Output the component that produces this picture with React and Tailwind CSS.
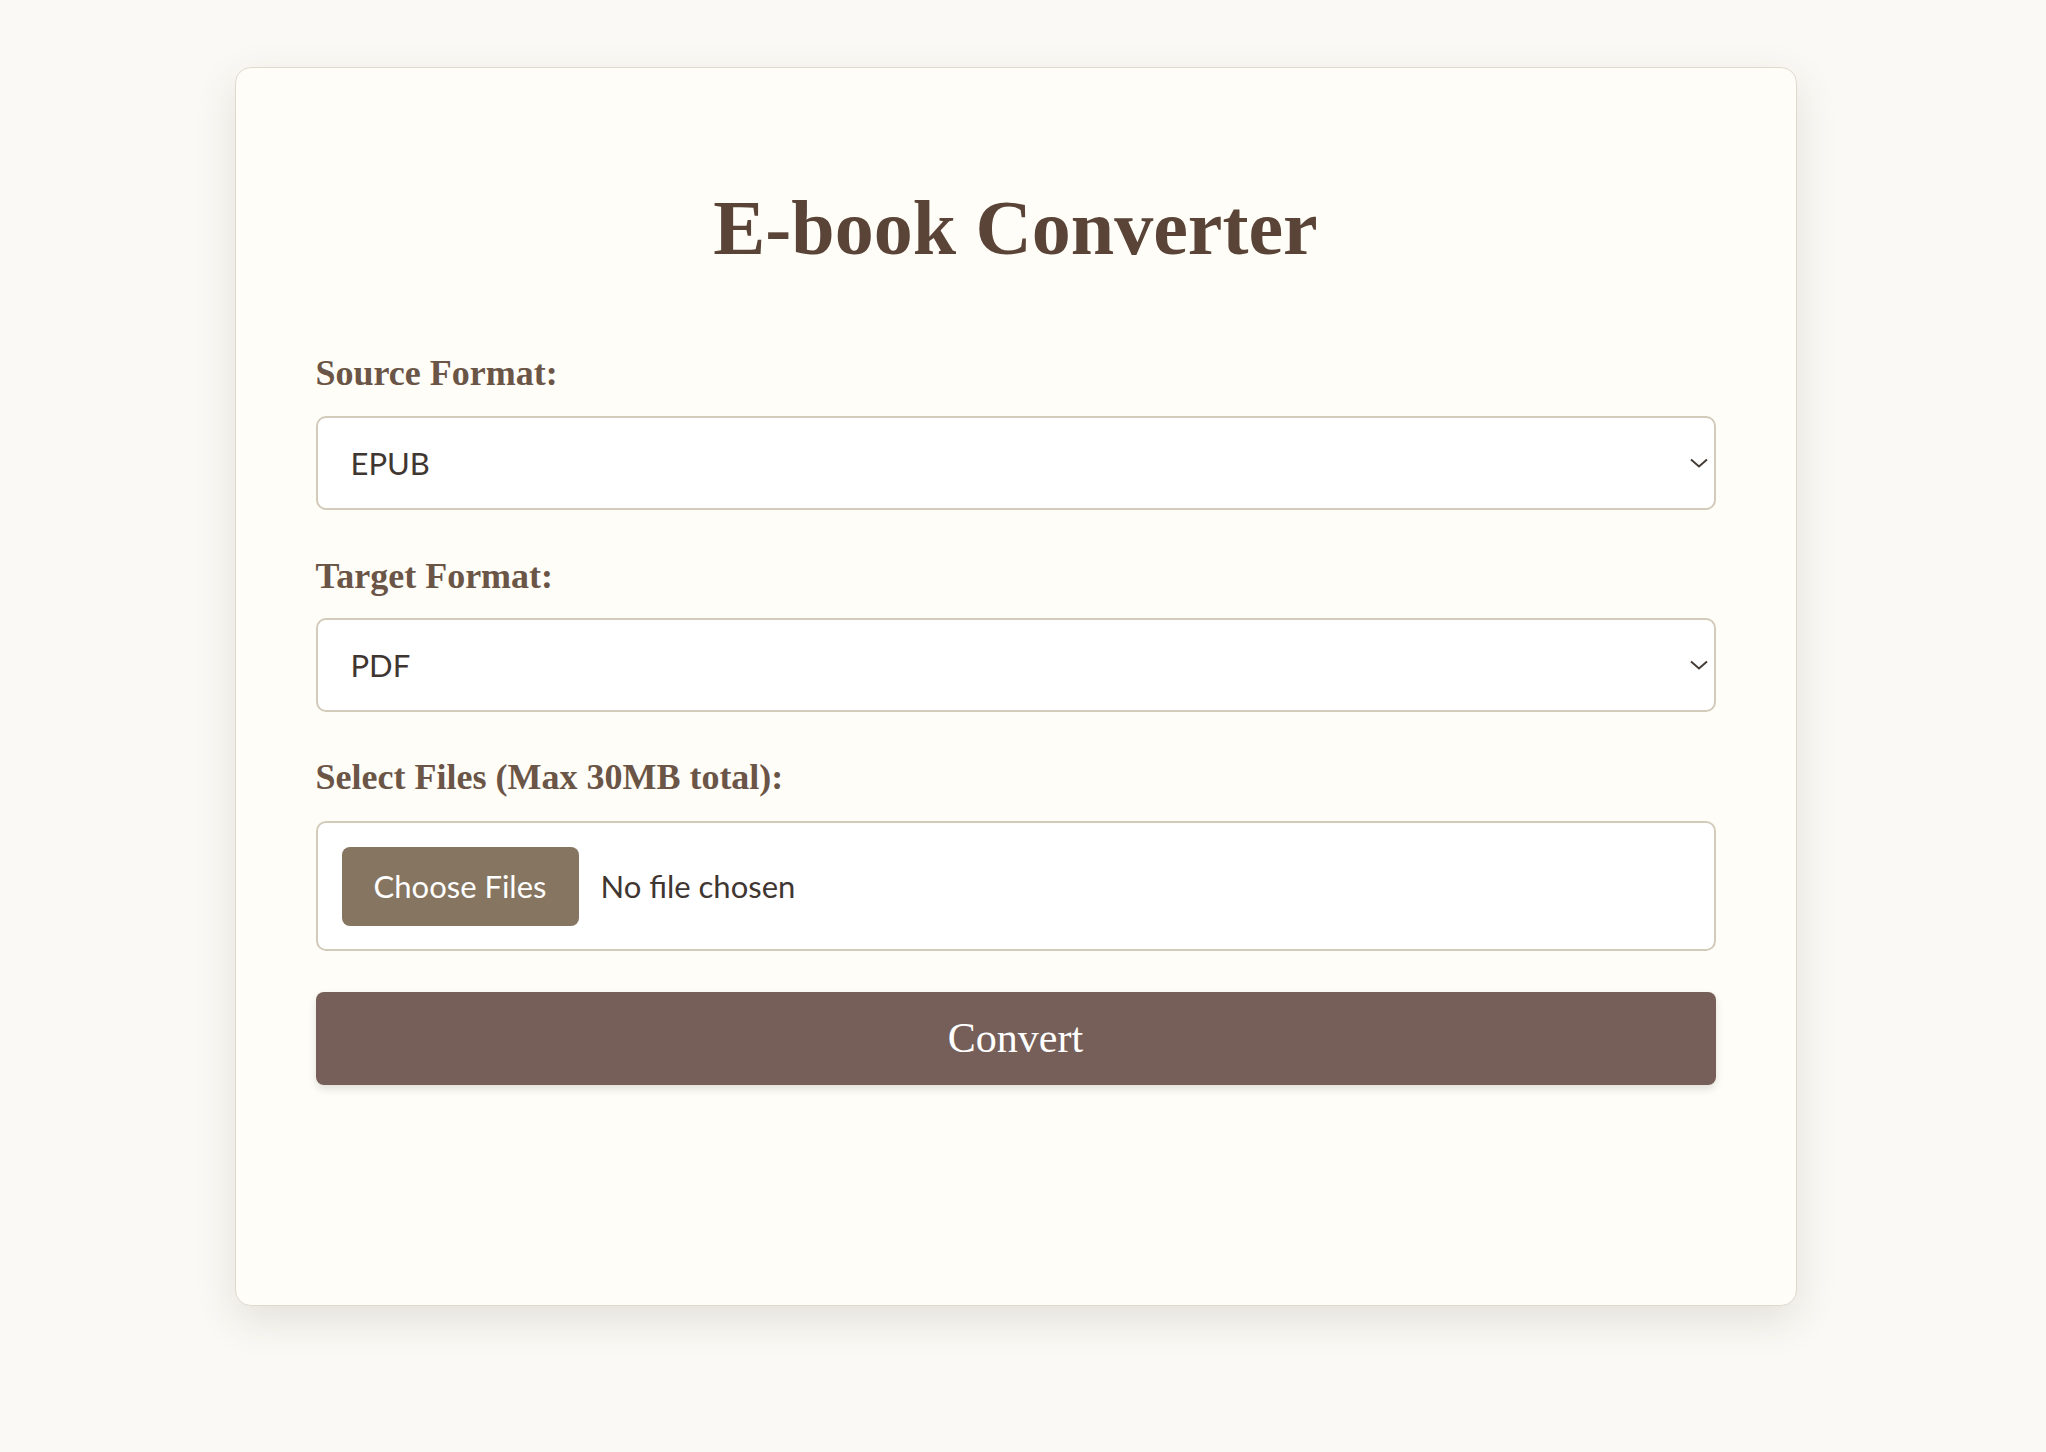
import React, { useState } from "react";

const serif = { fontFamily: '"Liberation Serif", "DejaVu Serif", serif' };
const sans = { fontFamily: 'Lato, "Open Sans", sans-serif' };

const formats = ["EPUB", "PDF", "MOBI", "AZW3", "TXT"];

function Chevron() {
  return (
    <svg
      className="pointer-events-none absolute right-[8px] top-1/2 -translate-y-1/2"
      width="18"
      height="10"
      viewBox="0 0 18 10"
      fill="none"
    >
      <polyline points="1,1.5 9,8.5 17,1.5" stroke="#463c36" strokeWidth="2" />
    </svg>
  );
}

function FormatSelect({ value, onChange }) {
  return (
    <div className="relative">
      <select
        value={value}
        onChange={(e) => onChange(e.target.value)}
        className="block h-[94px] w-full appearance-none rounded-[10px] border-2 border-[#d3cbba] bg-white pl-[33px] text-[31px] text-[#3f3631] outline-none"
        style={sans}
      >
        {formats.map((f) => (
          <option key={f} value={f}>
            {f}
          </option>
        ))}
      </select>
      <Chevron />
    </div>
  );
}

function Label({ children }) {
  return (
    <label className="block text-[36px] font-bold leading-none text-[#6a5547]" style={serif}>
      {children}
    </label>
  );
}

export default function App() {
  const [source, setSource] = useState("EPUB");
  const [target, setTarget] = useState("PDF");
  const [files, setFiles] = useState([]);

  return (
    <div className="min-h-screen bg-[#faf9f5] pt-[67px] pb-[150px] pr-[15px]">
      <div className="mx-auto w-[1562px] rounded-[16px] border border-[#dedace] bg-[#fffdf8] px-[80px] pt-[121px] pb-[220px] shadow-[0_14px_40px_rgba(70,60,40,0.13)]">
        <h1 className="text-center text-[78px] font-bold leading-none text-[#5a4437]" style={serif}>
          E-book Converter
        </h1>

        <div className="mt-[88px]">
          <Label>Source Format:</Label>
          <div className="mt-[25px]">
            <FormatSelect value={source} onChange={setSource} />
          </div>
        </div>

        <div className="mt-[48px]">
          <Label>Target Format:</Label>
          <div className="mt-[24px]">
            <FormatSelect value={target} onChange={setTarget} />
          </div>
        </div>

        <div className="mt-[47px]">
          <Label>Select Files (Max 30MB total):</Label>
          <div className="mt-[26px] flex h-[130px] items-center gap-[22px] rounded-[10px] border-2 border-[#d3cbba] bg-white px-[24px]" style={sans}>
            <label className="flex h-[79px] w-[237px] cursor-pointer items-center justify-center rounded-[8px] bg-[#867560] text-[31px] text-white">
              Choose Files
              <input
                type="file"
                multiple
                className="hidden"
                onChange={(e) => setFiles(Array.from(e.target.files || []))}
              />
            </label>
            <span className="text-[31px] text-[#3f3631]">
              {files.length === 0 ? "No file chosen" : `${files.length} files`}
            </span>
          </div>
        </div>

        <button
          className="mt-[41px] flex h-[93px] w-full items-center justify-center rounded-[8px] bg-[#765e59] text-[42px] text-white shadow-[0_4px_8px_rgba(0,0,0,0.12)]"
          style={serif}
        >
          Convert
        </button>
      </div>
    </div>
  );
}
